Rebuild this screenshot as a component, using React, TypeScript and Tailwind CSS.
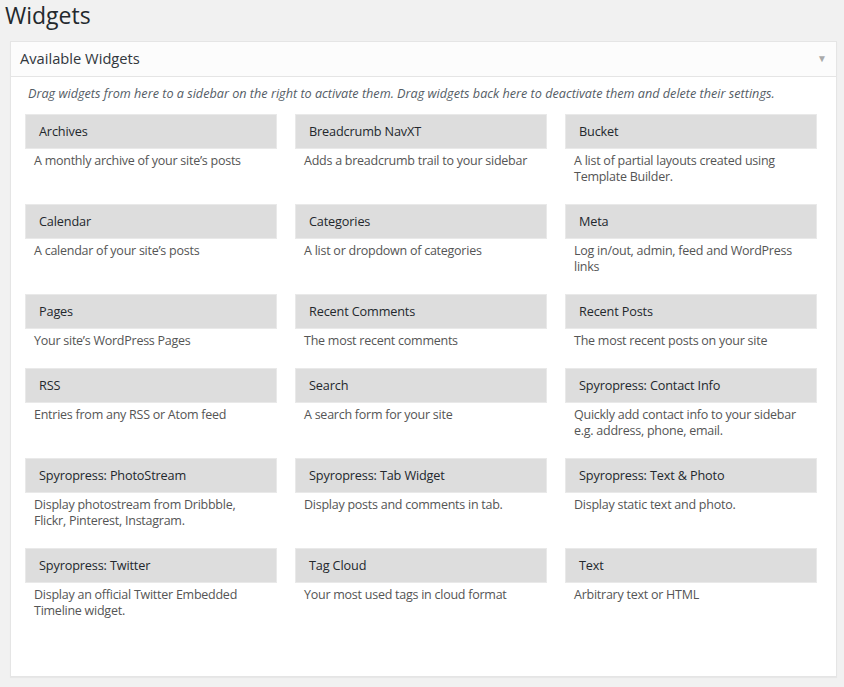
import React from "react";

const widgets = [
  { name: "Archives", desc: "A monthly archive of your site’s posts" },
  { name: "Breadcrumb NavXT", desc: "Adds a breadcrumb trail to your sidebar" },
  { name: "Bucket", desc: "A list of partial layouts created using Template Builder." },
  { name: "Calendar", desc: "A calendar of your site’s posts" },
  { name: "Categories", desc: "A list or dropdown of categories" },
  { name: "Meta", desc: "Log in/out, admin, feed and WordPress links" },
  { name: "Pages", desc: "Your site’s WordPress Pages" },
  { name: "Recent Comments", desc: "The most recent comments" },
  { name: "Recent Posts", desc: "The most recent posts on your site" },
  { name: "RSS", desc: "Entries from any RSS or Atom feed" },
  { name: "Search", desc: "A search form for your site" },
  { name: "Spyropress: Contact Info", desc: "Quickly add contact info to your sidebar e.g. address, phone, email." },
  { name: "Spyropress: PhotoStream", desc: "Display photostream from Dribbble, Flickr, Pinterest, Instagram." },
  { name: "Spyropress: Tab Widget", desc: "Display posts and comments in tab." },
  { name: "Spyropress: Text & Photo", desc: "Display static text and photo." },
  { name: "Spyropress: Twitter", desc: "Display an official Twitter Embedded Timeline widget." },
  { name: "Tag Cloud", desc: "Your most used tags in cloud format" },
  { name: "Text", desc: "Arbitrary text or HTML" },
];

export default function App() {
  return (
    <div className="min-h-[687px] bg-[#f1f1f1] font-['Open_Sans',sans-serif]">
      <h2 className="pl-[5px] pt-px text-[23px] leading-[29px] text-[#23282d]">Widgets</h2>

      <div className="ml-[10px] mt-[11px] w-[827px] border border-[#e5e5e5] bg-white shadow-[0_1px_1px_rgba(0,0,0,0.04)]">
        {/* Panel header */}
        <div className="flex h-[35px] items-center justify-between border-b border-[#e5e5e5] bg-[#fcfcfc] pb-[2px] pl-[9px] pr-[9px]">
          <h3 className="text-[14.7px] text-[#32373c]">Available Widgets</h3>
          <span className="text-[10px] text-[#aaaaaa]">▼</span>
        </div>

        <div className="pl-[14px] pb-[38px]">
          <p className="pl-[3px] pt-[7px] pb-[12px] text-[12.65px] italic leading-[18px] text-[#555d66]">
            Drag widgets from here to a sidebar on the right to activate them. Drag widgets back here to deactivate them and delete their settings.
          </p>

          <div className="grid grid-cols-[252px_252px_252px] gap-x-[18px]">
            {widgets.map((w) => (
              <div key={w.name} className="pb-[19px]">
                <div className="flex h-[35px] items-center border border-[#e9e9e9] bg-[#dddddd] pl-[13px]">
                  <h4 className="text-[12.7px] font-medium tracking-[-0.15px] text-[#23282d]">{w.name}</h4>
                </div>
                <p className="pl-[9px] pr-[8px] pt-[4px] text-[12.5px] leading-[16px] tracking-[-0.25px] text-[#555555]">{w.desc}</p>
              </div>
            ))}
          </div>
        </div>
      </div>
    </div>
  );
}
